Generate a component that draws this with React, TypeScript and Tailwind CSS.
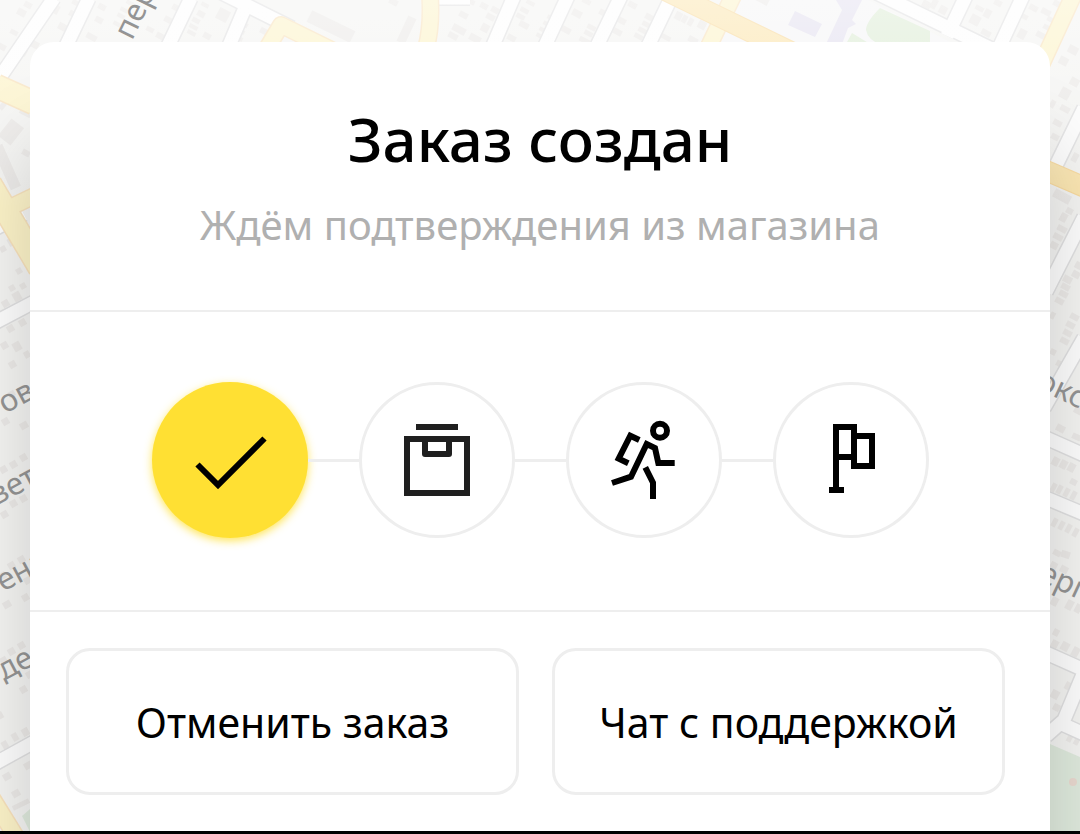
import clsx from "clsx";
import type { ReactNode } from "react";

type Building = [x: number, y: number, w: number, h: number, angle: number];

const buildings: Building[] = [
  // top edge, left to right
  [17, 9, 9, 7, 28], [24, 2, 8, 6, 28], [10, 30, 8, 5, 28], [32, 20, 9, 6, 28], [30, 41, 9, 7, 28],
  [58, 24, 11, 7, 28], [53, 5, 6, 9, 28], [69, 11, 8, 6, 28], [72, 0, 6, 5, 28], [86, 34, 11, 6, 28],
  [98, 4, 8, 6, 28], [95, 17, 8, 6, 28], [117, 14, 8, 4, 28], [120, 8, 8, 4, 28], [126, 1, 8, 4, 28],
  [113, 22, 8, 4, 28], [156, 33, 8, 6, 28], [164, 17, 9, 6, 28], [172, 5, 9, 6, 28], [146, 27, 8, 5, 28],
  [197, 11, 8, 6, 28], [201, 3, 8, 4, 28], [192, 18, 8, 5, 28], [189, 25, 9, 4, 28], [187, 31, 9, 4, 28],
  [217, 9, 12, 12, 28], [203, 33, 8, 6, 28], [240, 22, 8, 5, 28], [236, 29, 9, 4, 28], [234, 36, 9, 4, 28],
  [260, 28, 7, 6, 28], [307, 20, 48, 13, 26], [389, -1, 9, 6, 28],
  [402, 16, 9, 28, 25], [459, 12, 9, 6, 28], [466, -1, 9, 5, 28], [452, 26, 14, 7, 28], [448, 33, 10, 6, 28],
  [480, 3, 8, 6, 28], [491, 7, 8, 6, 28], [481, 24, 8, 8, 28], [486, 14, 9, 6, 28], [469, 35, 12, 7, 28],
  [516, 14, 9, 5, 28], [520, 8, 9, 5, 28], [519, 22, 10, 6, 28], [507, 35, 9, 6, 28], [526, 1, 9, 4, 28],
  [547, 16, 8, 4, 28], [543, 22, 8, 4, 28], [539, 28, 8, 4, 28], [536, 34, 8, 4, 28], [555, 4, 8, 4, 28],
  [572, 10, 10, 7, 28], [582, -1, 9, 5, 28], [561, 27, 10, 6, 28], [587, 25, 9, 5, 28], [584, 31, 9, 5, 28],
  [599, 10, 9, 6, 28], [579, 38, 11, 5, 28], [613, 29, 9, 6, 28], [618, 18, 8, 6, 28], [628, 2, 9, 6, 28],
  [645, 14, 8, 6, 28], [642, 22, 9, 5, 28], [638, 28, 9, 5, 28], [634, 34, 9, 5, 28], [661, 35, 10, 5, 28],
  [675, 12, 7, 8, 28], [682, 15, 5, 8, 28], [688, 18, 5, 8, 28], [698, 21, 8, 8, 28], [688, 37, 10, 6, 28],
  [755, -4, 14, 7, 28], [922, 1, 9, 7, 28], [931, -1, 6, 10, 28], [939, 6, 8, 8, 28],
  [975, 6, 9, 5, 28], [984, 9, 7, 9, 28], [970, 15, 10, 10, 28], [994, 0, 8, 6, 28], [981, 30, 10, 6, 28],
  [1029, 5, 9, 6, 28], [1020, 14, 8, 5, 28], [1041, 9, 10, 6, 28], [1047, 17, 7, 5, 28], [1043, 25, 8, 5, 28],
  [1018, 29, 8, 10, 28], [1036, 32, 9, 6, 28], [1053, 1, 9, 6, 28],
  // left edge
  [18, 48, 9, 7, 28], [-2, 44, 8, 6, 28], [0, 102, 5, 8, 40], [3, 121, 16, 22, 38], [20, 108, 12, 8, 28],
  [1, 144, 11, 46, -24], [22, 150, 8, 6, 28],
  [8, 238, 6, 8, -30], [0, 246, 6, 6, -30], [22, 256, 6, 6, -30], [16, 268, 6, 6, -30], [9, 285, 6, 6, -30],
  [20, 283, 6, 6, -30], [13, 292, 8, 9, -30], [2, 300, 7, 7, -30], [7, 325, 7, 7, -30], [19, 319, 7, 7, -30],
  [1, 342, 7, 7, -30], [13, 342, 8, 9, -30], [9, 361, 7, 7, -30], [24, 351, 6, 7, -30], [18, 386, 7, 6, -30],
  [8, 391, 7, 6, -30], [20, 422, 8, 7, -30], [2, 418, 7, 7, -30], [20, 454, 7, 7, -30], [10, 461, 7, 7, -30],
  [0, 466, 7, 7, -30], [24, 470, 7, 7, -30], [20, 495, 7, 7, -30], [10, 500, 7, 7, -30], [1, 511, 7, 7, -30],
  [18, 556, 7, 7, -30], [8, 562, 7, 7, -30], [0, 572, 6, 7, -30], [24, 577, 7, 7, -30], [22, 594, 7, 7, -30],
  [3, 601, 8, 7, -30], [18, 642, 7, 7, -30], [8, 648, 7, 7, -30], [0, 657, 7, 7, -30], [20, 686, 7, 7, -30],
  [26, 671, 7, 7, -30], [-3, 712, 6, 7, -30], [22, 728, 7, 8, -30], [12, 733, 6, 8, -30], [2, 741, 6, 8, -30],
  [24, 762, 8, 7, -30], [3, 773, 8, 7, -30], [12, 790, 8, 7, -30], [12, 802, 18, 5, -26],
  // right edge
  [1068, 46, 10, 8, 28], [1059, 57, 9, 8, 28], [1070, 78, 9, 8, 28], [1060, 88, 10, 11, 28], [1050, 100, 5, 8, 28],
  [1060, 106, 10, 6, 28], [1053, 120, 9, 6, 28], [1051, 134, 8, 6, 28], [1072, 153, 6, 9, 28], [1053, 192, 18, 9, 28],
  [1066, 208, 7, 6, 28], [1060, 213, 7, 9, 28], [1057, 226, 10, 6, 28], [1053, 234, 10, 6, 28], [1050, 242, 8, 7, 28],
  [1075, 262, 7, 7, 28], [1072, 271, 8, 7, 28], [1063, 276, 9, 7, 28], [1061, 284, 9, 6, 28], [1059, 291, 9, 6, 28],
  [1055, 298, 9, 6, 28], [1070, 314, 9, 6, 28], [1066, 322, 9, 6, 28], [1063, 330, 9, 6, 28], [1060, 338, 9, 6, 28],
  [1050, 312, 5, 7, 28], [1050, 349, 6, 6, 28], [1056, 361, 8, 6, 28], [1074, 407, 8, 7, 28], [1056, 425, 9, 7, 28],
  [1072, 434, 9, 6, 25], [1052, 457, 7, 9, 28], [1060, 460, 7, 9, 28], [1068, 463, 7, 9, 28], [1070, 479, 7, 6, 28],
  [1051, 483, 5, 9, 28], [1057, 485, 5, 9, 28], [1064, 488, 5, 9, 28], [1071, 491, 5, 9, 28],
  [1052, 518, 5, 9, 28], [1059, 521, 5, 9, 28], [1066, 524, 5, 9, 28], [1073, 528, 5, 9, 28],
  [1053, 550, 8, 6, 28], [1061, 551, 9, 7, 18], [1050, 562, 7, 8, 28], [1060, 566, 8, 7, 28], [1051, 597, 7, 9, 28],
  [1066, 600, 7, 10, 28], [1075, 604, 6, 9, 28], [1053, 629, 6, 7, 28], [1051, 640, 7, 9, 28], [1061, 642, 8, 9, 28],
  [1072, 647, 7, 10, 28], [1065, 682, 6, 8, 28], [1051, 690, 8, 9, 28], [1053, 704, 7, 7, 28], [1067, 735, 5, 7, 28],
  [1074, 738, 5, 7, 28],
];

// Side streets, drawn twice: a grey casing and a white core.
const streets = [
  "M54 -2L-2 80",
  "M89 -2L66 46",
  "M191 -2L168 46",
  "M216 -10L292 28",
  "M245 8L228 48",
  "M437 -2H470",
  "M515 -6L491 50",
  "M569 -6L543 50",
  "M622 -6L595 50",
  "M671 -2L648 46",
  "M850 -20L1000 53",
  "M966 -4L947 36",
  "M1023 -4L999 48",
  "M-4 228L24 214",
  "M-4 322L34 302",
  "M-4 763L34 742",
  "M1048 182L1084 108",
  "M1046 292L1084 217",
  "M1044 408L1084 338",
  "M1046 438L1084 455",
  "M1046 498L1084 514",
  "M1046 653L1084 670",
  "M1084 672L1064 720L1046 736",
  "M1062 724L1084 734",
];

const yellowRoads = [
  "M266 50L281 25L340 54",
  "M430 -4Q432 26 426 48",
  "M734 -6L708 48",
  "M1074 -6L1038 72",
  "M13 206L36 195",
  "M-8 798L18 840",
];

const wideYellowRoads = ["M-4 86L34 103", "M-10 184L40 268"];

const labels = [
  { text: "пер", x: 132, y: 41, angle: -64 },
  { text: "ова", x: 5, y: 414, angle: -28 },
  { text: "вет", x: -4, y: 506, angle: -28 },
  { text: "ени", x: 3, y: 592, angle: -28 },
  { text: "дел", x: 4, y: 681, angle: -28 },
  { text: "окс", x: 1035, y: 388, angle: 25 },
  { text: "ерг", x: 1037, y: 580, angle: 25 },
];

function MapBackdrop() {
  return (
    <svg
      aria-hidden="true"
      className="absolute inset-0 h-full w-full"
      viewBox="0 0 1080 834"
      preserveAspectRatio="xMidYMid slice"
    >
      <defs>
        <linearGradient id="fade" x1="0" y1="0" x2="0" y2="1">
          <stop offset="0" stopColor="#fff" stopOpacity="0.5" />
          <stop offset="0.25" stopColor="#fff" stopOpacity="0" />
        </linearGradient>
      </defs>
      <rect width="1080" height="834" fill="#f4f4f2" />
      <path d="M735 0H868L950 42H700Z" fill="#f5f5f6" />
      <path d="M795 11L822 24L815 37L788 25Z M836 0H862L852 20L856 24L848 28L842 44H826L842 10Z" fill="#e3e0ef" />
      <path d="M880 8Q866 22 866 30Q868 40 880 44H930V31Z M852 33L846 44H870Z" fill="#ddecd5" />
      <path d="M1050 744L1080 757V834H1050Z M30 809L22 816L30 832Z" fill="#dfeadd" />
      <g fill="#ebe9e7">
        {buildings.map(([x, y, w, h, angle]) => (
          <rect
            key={`${x}-${y}`}
            x={x}
            y={y}
            width={w}
            height={h}
            transform={`rotate(${angle} ${x + w / 2} ${y + h / 2})`}
          />
        ))}
      </g>
      <g fill="none" strokeLinejoin="round">
        <path d={streets.join("")} stroke="#e0e0e1" strokeWidth="16" />
        <path d={streets.join("")} stroke="#fdfdfd" strokeWidth="13" />
        <path d={yellowRoads.join("")} stroke="#f8e2bc" strokeWidth="18" />
        <path d={wideYellowRoads.join("")} stroke="#f8e2bc" strokeWidth="25" />
        <path d={yellowRoads.join("")} stroke="#fcf3c8" strokeWidth="15" />
        <path d={wideYellowRoads.join("")} stroke="#fcf3c8" strokeWidth="22" />
        <path d="M660 -12L800 56M1040 168L1084 187" stroke="#f8d99c" strokeWidth="21" />
        <path d="M660 -12L800 56M1040 168L1084 187" stroke="#fbe5ae" strokeWidth="19" />
      </g>
      <circle cx="1073" cy="782" r="4" fill="#e9d9cf" />
      <rect width="1080" height="834" fill="url(#fade)" />
      <g fill="#949494" fontFamily="'Noto Sans', sans-serif" fontSize="31">
        {labels.map(({ text, x, y, angle }) => (
          <text key={text} transform={`translate(${x} ${y}) rotate(${angle})`}>
            {text}
          </text>
        ))}
      </g>
    </svg>
  );
}

function Icon({ children, className }: { children: ReactNode; className?: string }) {
  return (
    <svg
      aria-hidden="true"
      className={clsx("size-24", className)}
      viewBox="0 0 96 96"
      fill="none"
      stroke="currentColor"
      strokeWidth="6"
    >
      {children}
    </svg>
  );
}

const steps = [
  {
    id: "created",
    icon: (
      <Icon>
        <path d="M15.5 52.5L36 73L82.5 26.5" />
      </Icon>
    ),
  },
  {
    id: "packing",
    icon: (
      <Icon className="text-[#1f1f1f]">
        <path d="M27 15H69M18 27H78V81H18Z" />
        <path d="M36 27V42H60V27" strokeLinejoin="round" />
      </Icon>
    ),
  },
  {
    id: "courier",
    icon: (
      <Icon>
        <circle cx="64" cy="18.7" r="7" />
        <path d="M43.3 28L34.3 23.7L22.7 46.7L32.3 51.3" />
        <path d="M16 71L35 64.7L50.7 32L59 36L62.3 51H78.7" />
        <path d="M49.3 55.3L57 70.7V87" />
      </Icon>
    ),
  },
  {
    id: "delivered",
    icon: (
      <Icon>
        <path d="M33 78V15H51V45H33M51 24H69V54H51V42M26 78H41" />
      </Icon>
    ),
  },
];

const actions = ["Отменить заказ", "Чат с поддержкой"];

export default function App() {
  return (
    <div className="relative flex min-h-screen flex-col overflow-hidden font-['Noto_Sans',sans-serif] text-black">
      <MapBackdrop />

      <main className="relative mx-[30px] mt-[42px] flex-1 rounded-t-3xl bg-white shadow-[0_100px_80px_rgba(0,0,0,0.17)]">
        <header className="border-b-2 border-[#eeeeee] px-9 pt-[57px] pb-[57px] text-center">
          <h1 className="text-[60px] leading-[80px] font-medium">Заказ создан</h1>
          <p className="mt-[18px] text-[40px] leading-[56px] text-[#b0b0b0]">
            Ждём подтверждения из магазина
          </p>
        </header>

        <ol className="flex items-center justify-center border-b-2 border-[#eeeeee] pt-[70px] pb-[72px]">
          {steps.map(({ id, icon }, i) => (
            <li key={id} className="flex items-center">
              {i > 0 && <span className="h-[3px] w-[51px] bg-[#eeeeee]" />}
              <div
                className={clsx(
                  "flex size-[156px] items-center justify-center rounded-full",
                  i === 0
                    ? "bg-[#ffe033] shadow-[0_3px_9px_rgba(255,224,51,0.8)]"
                    : "border-[3px] border-[#eeeeee] bg-white",
                )}
              >
                {icon}
              </div>
            </li>
          ))}
        </ol>

        <div className="grid grid-cols-2 gap-[33px] py-9 pr-[45px] pl-9">
          {actions.map((label) => (
            <button
              key={label}
              type="button"
              className="h-[147px] rounded-3xl border-[3px] border-[#eeeeee] bg-white text-[41px] leading-[56px]"
            >
              {label}
            </button>
          ))}
        </div>
      </main>

      <div className="relative h-[3px] bg-black" />
    </div>
  );
}
